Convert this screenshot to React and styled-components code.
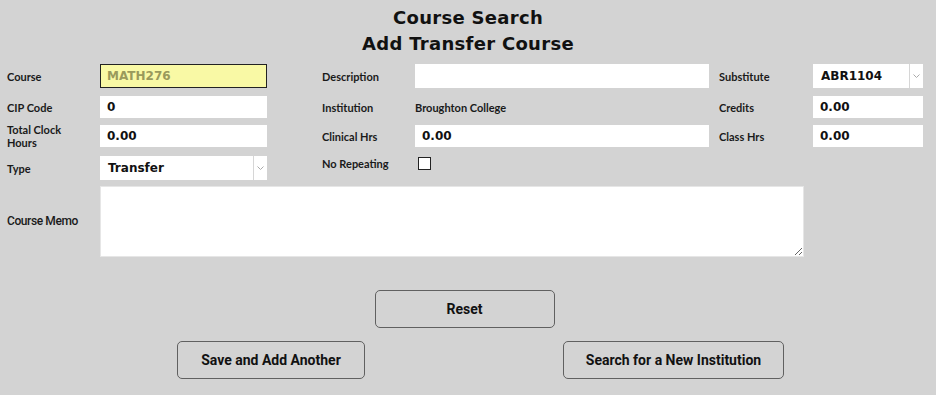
import styled, { createGlobalStyle } from "styled-components";

const GlobalStyle = createGlobalStyle`
	html, body {
		margin: 0;
		background: #d3d3d3;
	}
	body {
		font-family: "DejaVu Sans", "Liberation Sans", sans-serif;
		color: #111;
	}
`;

const Page = styled.div`
	width: 936px;
	height: 395px;
	background: #d3d3d3;
	padding-top: 5px;
	box-sizing: border-box;
`;

const Title = styled.h1`
	margin: 0;
	text-align: center;
	font-family: "DejaVu Sans", sans-serif;
	font-weight: 700;
	font-size: 18px;
	line-height: 26px;
	letter-spacing: 0.3px;
	color: #111;
`;

const Form = styled.div`
	display: grid;
	grid-template-columns: 93px 167px 55px 93px 294px 10px 94px 110px;
	grid-template-rows: 32px 29px 31px 30px 71px;
	align-items: start;
	margin: 7px 0 0 7px;
`;

const Label = styled.div`
	grid-column: ${(p) => p.col};
	display: flex;
	align-items: center;
	height: ${(p) => p.h || 22}px;
	font-family: "Lato", "Liberation Sans", sans-serif;
	font-weight: 700;
	font-size: 11px;
	line-height: 13px;
	color: #1a1a1a;
`;

const Input = styled.input`
	grid-column: ${(p) => p.col};
	box-sizing: border-box;
	width: 100%;
	height: ${(p) => p.h || 22}px;
	margin: 0;
	padding: 0 6px;
	border: 1px solid ${(p) => (p.$focus ? "#222" : "#fff")};
	background: ${(p) => (p.$focus ? "#f9f9a5" : "#fff")};
	outline: none;
	font-family: "DejaVu Sans", "Liberation Sans", sans-serif;
	font-weight: 700;
	font-size: 12px;
	color: ${(p) => (p.$focus ? "#9a9a5c" : "#111")};
`;

const Plain = styled.div`
	grid-column: ${(p) => p.col};
	display: flex;
	align-items: center;
	height: 22px;
	font-family: "Lato", "Liberation Sans", sans-serif;
	font-weight: 700;
	font-size: 11px;
	color: #1a1a1a;
`;

const Select = styled.div`
	grid-column: ${(p) => p.col};
	display: flex;
	height: 24px;
	background: #fff;
`;

const SelectValue = styled.div`
	flex: 1;
	display: flex;
	align-items: center;
	padding-left: 8px;
	font-family: "DejaVu Sans", "Liberation Sans", sans-serif;
	font-weight: 700;
	font-size: 12px;
	color: #111;
`;

const SelectArrow = styled.div`
	width: 13px;
	border-left: 1px solid #d6d6d6;
	display: flex;
	align-items: center;
	justify-content: center;
	svg {
		width: 7px;
		height: 4px;
	}
`;

const CheckCell = styled.div`
	grid-column: ${(p) => p.col};
	height: 14px;
	padding-left: 3px;
	display: flex;
	align-items: center;
`;

const Check = styled.span`
	display: block;
	width: 11px;
	height: 11px;
	border: 1px solid #222;
	background: #fff;
`;

const Memo = styled.textarea`
	grid-column: 2 / 6;
	box-sizing: border-box;
	width: 704px;
	height: 71px;
	margin: 0;
	border: 1px solid #e6e6e6;
	background: #fff;
	resize: both;
	outline: none;
`;

const MemoLabel = styled(Label)`
	height: 71px;
	font-family: "Roboto", sans-serif;
	font-weight: 500;
	font-size: 12px;
	letter-spacing: -0.4px;
`;

const Actions = styled.div`
	display: flex;
	flex-direction: column;
	margin-top: 33px;
`;

const ResetRow = styled.div`
	display: flex;
	justify-content: center;
	padding-right: 7px;
`;

const BottomRow = styled.div`
	display: flex;
	padding-left: 177px;
	gap: 198px;
	margin-top: 13px;
`;

const Button = styled.button`
	width: ${(p) => p.w}px;
	height: 38px;
	border: 1px solid #606060;
	border-radius: 5px;
	background: #d3d3d3;
	font-family: "Roboto", sans-serif;
	font-weight: 700;
	font-size: 14px;
	color: #111;
	cursor: pointer;
`;

const Chevron = () => (
	<svg viewBox="0 0 7 4">
		<path d="M0.5 0.5 L3.5 3.5 L6.5 0.5" fill="none" stroke="#aaa" strokeWidth="1" />
	</svg>
);

const App = () => {
	return (
		<>
			<GlobalStyle />
			<Page>
				<Title>
					Course Search
					<br />
					Add Transfer Course
				</Title>
				<Form>
					<Label col={1} h={24}>Course</Label>
					<Input col={2} h={24} $focus defaultValue="MATH276" />
					<Label col={4} h={24}>Description</Label>
					<Input col={5} h={24} defaultValue="" />
					<Label col={7} h={24}>Substitute</Label>
					<Select col={8}>
						<SelectValue>ABR1104</SelectValue>
						<SelectArrow>
							<Chevron />
						</SelectArrow>
					</Select>

					<Label col={1}>CIP Code</Label>
					<Input col={2} defaultValue="0" />
					<Label col={4}>Institution</Label>
					<Plain col={5}>Broughton College</Plain>
					<Label col={7}>Credits</Label>
					<Input col={8} defaultValue="0.00" />

					<Label col={1}>
						Total Clock
						<br />
						Hours
					</Label>
					<Input col={2} defaultValue="0.00" />
					<Label col={4}>Clinical Hrs</Label>
					<Input col={5} defaultValue="0.00" />
					<Label col={7}>Class Hrs</Label>
					<Input col={8} defaultValue="0.00" />

					<Label col={1} h={24}>Type</Label>
					<Select col={2}>
						<SelectValue>Transfer</SelectValue>
						<SelectArrow>
							<Chevron />
						</SelectArrow>
					</Select>
					<Label col={4} h={14}>No Repeating</Label>
					<CheckCell col={5}>
						<Check />
					</CheckCell>

					<MemoLabel col={1}>Course Memo</MemoLabel>
					<Memo />
				</Form>
				<Actions>
					<ResetRow>
						<Button w={180}>Reset</Button>
					</ResetRow>
					<BottomRow>
						<Button w={188}>Save and Add Another</Button>
						<Button w={221}>Search for a New Institution</Button>
					</BottomRow>
				</Actions>
			</Page>
		</>
	);
};

export default App;
